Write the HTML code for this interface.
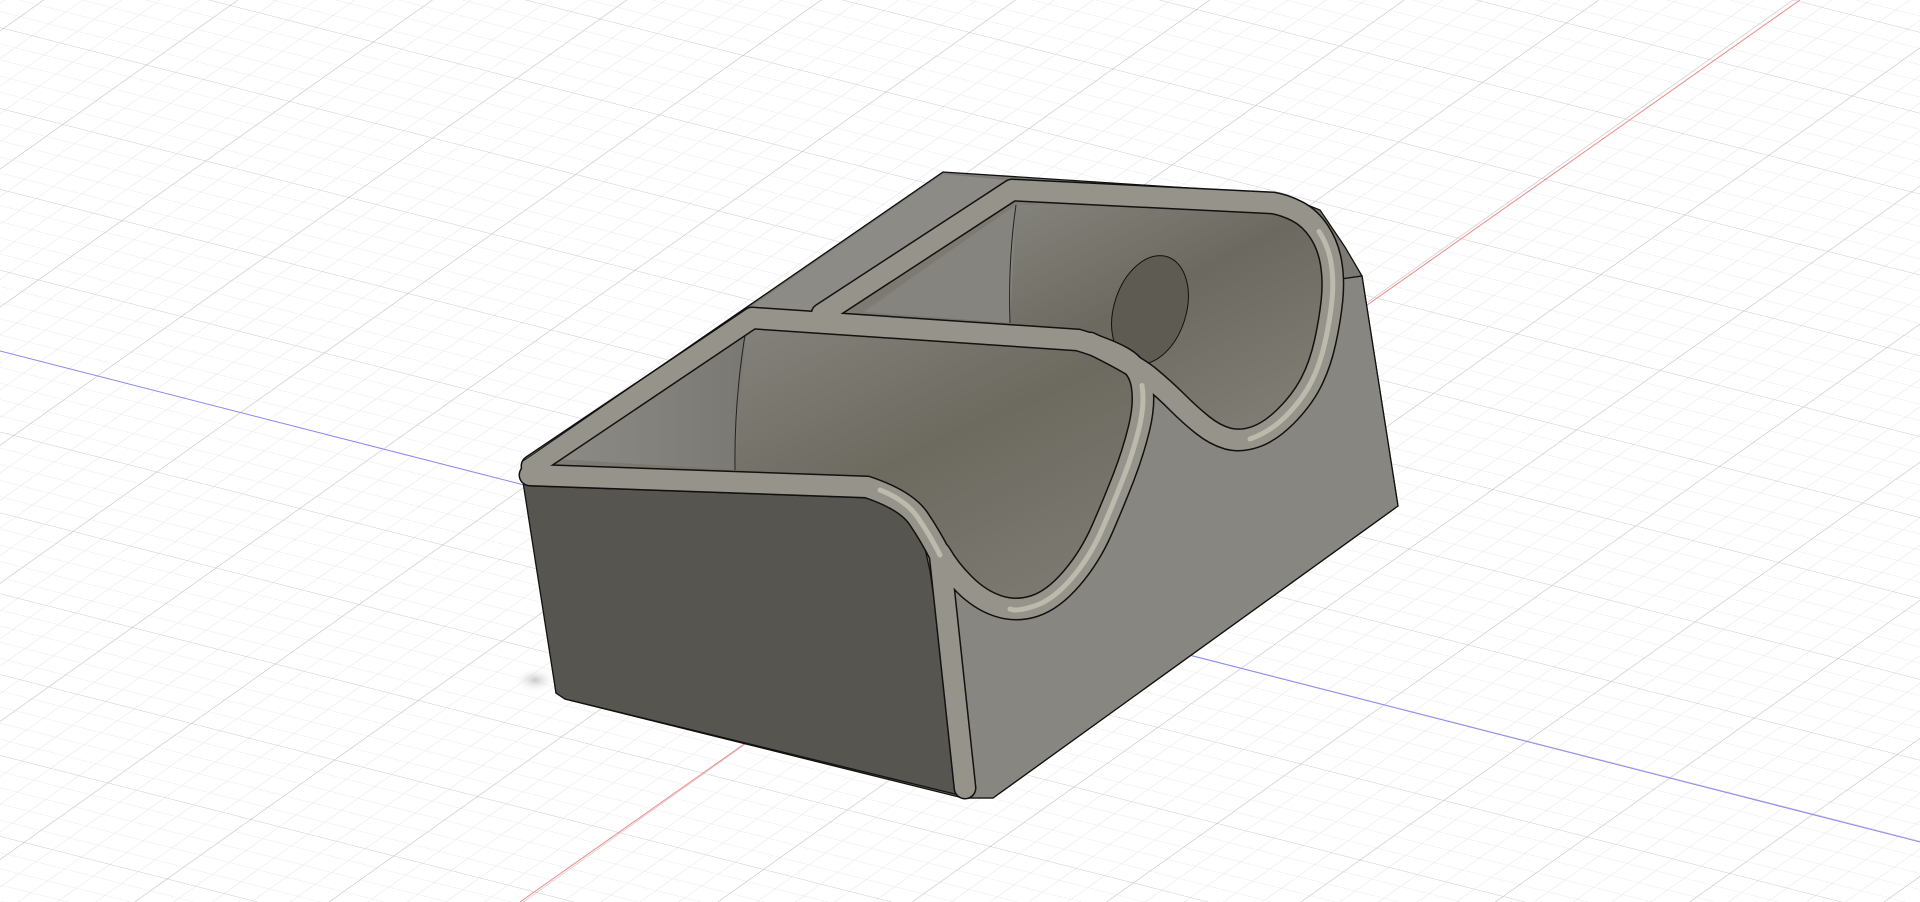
<!DOCTYPE html>
<html><head><meta charset="utf-8"><style>
html,body{margin:0;padding:0;background:#fff;overflow:hidden}
svg{display:block}
</style></head><body>
<svg width="1920" height="902" viewBox="0 0 1920 902" xmlns="http://www.w3.org/2000/svg">
<defs>
<pattern id="minor" width="10" height="10" patternUnits="userSpaceOnUse" patternTransform="matrix(2.86,0.73,1.675,-1.19,955,595)">
<path d="M0 0H10M0 0V10" stroke="#e6e6e6" stroke-width="0.45" fill="none"/>
</pattern>
<pattern id="major" width="50" height="50" patternUnits="userSpaceOnUse" patternTransform="matrix(2.86,0.73,1.675,-1.19,955,595)">
<path d="M0 0H50M0 0V50" stroke="#c6c6c6" stroke-width="0.5" fill="none"/>
</pattern>
<linearGradient id="cr1" x1="0" y1="0" x2="1" y2="1">
<stop offset="0" stop-color="#908f89"/><stop offset="0.55" stop-color="#6d6a60"/><stop offset="1" stop-color="#807e76"/>
</linearGradient>
<linearGradient id="cr2" x1="0" y1="0" x2="1" y2="1">
<stop offset="0" stop-color="#8f8e88"/><stop offset="0.5" stop-color="#6c6a60"/><stop offset="1" stop-color="#858379"/>
</linearGradient>
<linearGradient id="wall" x1="0" y1="0" x2="1" y2="0">
<stop offset="0" stop-color="#8c8b86"/><stop offset="1" stop-color="#7a7872"/>
</linearGradient>
<radialGradient id="sh" cx="0.5" cy="0.5" r="0.5"><stop offset="0" stop-color="#c8c8c8"/><stop offset="1" stop-color="#fff" stop-opacity="0"/></radialGradient>
</defs>
<rect width="1920" height="902" fill="#fff"/>
<rect width="1920" height="902" fill="url(#minor)"/>
<rect width="1920" height="902" fill="url(#major)"/>
<line x1="0" y1="351" x2="1920" y2="842" stroke="#8a8af0" stroke-width="1"/>
<line x1="520" y1="902" x2="1800" y2="0" stroke="#f08a8a" stroke-width="1"/>
<ellipse cx="535" cy="680" rx="22" ry="13" fill="url(#sh)"/>

<polygon points="523,461 532,455 943,172 1280,194 1320,210 1345,247 1362,276 1398,506 993,798 963,798 565,699 556,693" fill="#7c7a72" stroke="#111" stroke-width="1.3"/>
<polygon points="532,458 943,174 1005,180 820,310 749,314" fill="#8c8b86"/>
<!-- back compartment interior -->
<path d="M864,310 L1016,205 L1273,203 L1310,218 L1334,280 L1320,365 L1302,400 L1240,442 L1190,415 L1135,365 L1090,343 Z" fill="url(#cr2)"/>
<path d="M864,312 L1016,205 L1010,323 Z" fill="#85847e"/>
<path d="M1016,205 Q1008,260 1010,323" stroke="#222" stroke-width="1" fill="none"/>
<ellipse cx="1150" cy="310" rx="36" ry="56" transform="rotate(18 1150 310)" fill="#5d5b52" stroke="#111" stroke-width="1"/>
<!-- front compartment interior -->
<path d="M532,461 L749,312 L1078,340 L1108,349 L1139,367 L1145,404 L1133,453 L1114,502 L1090,557 L1053,600 L1016,612 L980,600 L949,569 L931,539 L906,502 L867,490 Z" fill="url(#cr1)"/>
<polygon points="559,459 746,329 735,470" fill="url(#wall)"/>
<path d="M746,329 Q734,400 735,470" stroke="#222" stroke-width="1" fill="none"/>
<!-- right face -->
<path d="M930,571 L963,798 L993,798 L1398,506 L1362,276 L1334,280 L1330,320 L1320,365 L1302,400 L1270,432 L1240,442 L1215,435 L1190,415 L1165,390 L1145,378 L1142,385 L1145,404 L1133,453 L1114,502 L1090,557 L1053,600 L1016,612 L980,600 L949,569 L940,553 Z" fill="#878680" stroke="#111" stroke-width="1.3"/>
<!-- front face -->
<path d="M523,482 L867,494 Q910,502 922,535 L930,571 L963,796 L565,699 L556,693 Z" fill="#57554f" stroke="#111" stroke-width="1.3"/>

<g fill="none" stroke-linecap="round" stroke-linejoin="round">
<g stroke="#111" stroke-width="23">
<path id="r1" d="M530,475 L867,487 Q906,500 918.5,518.5 Q931,537 940,555 L965,788"/>
<path id="r2" d="M940,553 Q949,569 964.5,584.5 Q980,600 998,606 Q1016,612 1034.5,606 Q1053,600 1071.5,578.5 Q1090,557 1102,529.5 Q1114,502 1123.5,477.5 Q1133,453 1139,428.5 Q1145,404 1142,385.5 Q1139,367 1123.5,358 Q1108,349 1078,340 L752,318 L532,466"/>
<path id="r3" d="M1090,343 Q1135,365 1150,377.5 Q1165,390 1177.5,402.5 Q1190,415 1202.5,425 Q1215,435 1227.5,438.5 Q1240,442 1255,437 Q1270,432 1286,416 Q1302,400 1311,382.5 Q1320,365 1325,342.5 Q1330,320 1332,300 Q1334,280 1331,262.5 Q1328,245 1319,231.5 Q1310,218 1297.5,211.5 Q1285,205 1273,203 L1012,190 L822,314"/>
</g>
<g stroke="#96938a" stroke-width="20">
<path d="M530,475 L867,487 Q906,500 918.5,518.5 Q931,537 940,555 L965,788"/>
<path d="M940,553 Q949,569 964.5,584.5 Q980,600 998,606 Q1016,612 1034.5,606 Q1053,600 1071.5,578.5 Q1090,557 1102,529.5 Q1114,502 1123.5,477.5 Q1133,453 1139,428.5 Q1145,404 1142,385.5 Q1139,367 1123.5,358 Q1108,349 1078,340 L752,318 L532,466"/>
<path d="M1090,343 Q1135,365 1150,377.5 Q1165,390 1177.5,402.5 Q1190,415 1202.5,425 Q1215,435 1227.5,438.5 Q1240,442 1255,437 Q1270,432 1286,416 Q1302,400 1311,382.5 Q1320,365 1325,342.5 Q1330,320 1332,300 Q1334,280 1331,262.5 Q1328,245 1319,231.5 Q1310,218 1297.5,211.5 Q1285,205 1273,203 L1012,190 L822,314"/>
</g>
<g stroke="#bcb9ad" stroke-width="5">
<path d="M880,490 Q906,500 918.5,518.5 Q931,537 940,555"/>
<path d="M1010,609 Q1016,612 1034.5,606 Q1053,600 1071.5,578.5 Q1090,557 1102,529.5 Q1114,502 1123.5,477.5 Q1133,453 1139,428.5 Q1145,404 1142,385.5"/>
<path d="M1250,439 Q1270,432 1286,416 Q1302,400 1311,382.5 Q1320,365 1325,342.5 Q1330,320 1332,300 Q1334,280 1331,262.5 Q1328,245 1319,231.5"/>
</g>
</g>
<g stroke="#111" stroke-width="1" fill="none">
<path d="M523,461 L532,455 L943,172"/>
<path d="M530,486 L867,498"/>
</g>
</svg>
</body></html>
